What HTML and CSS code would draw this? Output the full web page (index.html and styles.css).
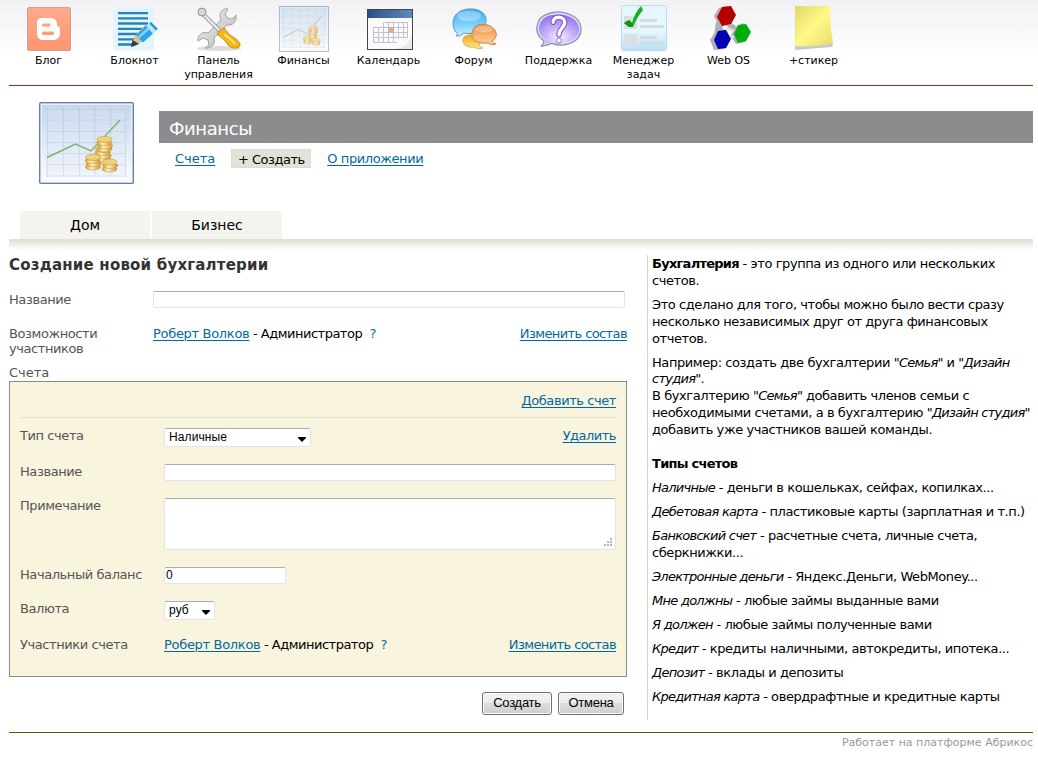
FILE: index.html
```html
<!DOCTYPE html>
<html lang="ru">
<head>
<meta charset="utf-8">
<title>Финансы</title>
<link rel="stylesheet" href="styles.css">
</head>
<body>
<svg class="defs" width="0" height="0">
  <defs>
    <linearGradient id="sky" x1="0" y1="0" x2="0" y2="1"><stop offset="0" stop-color="#c3d5ee"/><stop offset="1" stop-color="#fdfdff"/></linearGradient>
    <linearGradient id="orange" x1="0" y1="0" x2="0" y2="1"><stop offset="0" stop-color="#ffa98d"/><stop offset="1" stop-color="#ff9a72"/></linearGradient>
    <linearGradient id="paper" x1="0" y1="0" x2="0" y2="1"><stop offset="0" stop-color="#e4f5fe"/><stop offset=".55" stop-color="#e9f7ff"/><stop offset="1" stop-color="#b9e0f8"/></linearGradient>
    <linearGradient id="coin" x1="0" y1="0" x2="1" y2="0"><stop offset="0" stop-color="#d09a30"/><stop offset=".4" stop-color="#fff3bd"/><stop offset="1" stop-color="#cc9433"/></linearGradient>
    <linearGradient id="blueb" x1="0" y1="0" x2="0" y2="1"><stop offset="0" stop-color="#3fa5e8"/><stop offset=".5" stop-color="#71cbff"/><stop offset="1" stop-color="#c9f1ff"/></linearGradient>
    <linearGradient id="orangeb" x1="0" y1="0" x2="0" y2="1"><stop offset="0" stop-color="#ee8a3a"/><stop offset="1" stop-color="#ffd3a0"/></linearGradient>
    <linearGradient id="yellowb" x1="0" y1="0" x2="0" y2="1"><stop offset="0" stop-color="#e8a920"/><stop offset="1" stop-color="#ffe98c"/></linearGradient>
    <radialGradient id="violet" cx=".5" cy=".8" r=".75"><stop offset="0" stop-color="#f4f0ff"/><stop offset=".5" stop-color="#c3b0fb"/><stop offset="1" stop-color="#9476ee"/></radialGradient>
    <linearGradient id="note" x1="0" y1="0" x2="1" y2="1"><stop offset="0" stop-color="#e2d768"/><stop offset=".5" stop-color="#fff986"/><stop offset="1" stop-color="#e5dc6c"/></linearGradient>
    <linearGradient id="steel" x1="0" y1="0" x2="1" y2="1"><stop offset="0" stop-color="#f4f4f4"/><stop offset="1" stop-color="#b4b4b4"/></linearGradient>
    <linearGradient id="calhead" x1="0" y1="0" x2="1" y2="0"><stop offset="0" stop-color="#2b4f8c"/><stop offset="1" stop-color="#6089bd"/></linearGradient>
    <g id="stack3" fill="url(#coin)" stroke="#c9963a" stroke-width=".6">
      <ellipse cx="0" cy="0" rx="7.500" ry="3"/>
      <ellipse cx=".7" cy="-3.200" rx="7.500" ry="3"/>
      <ellipse cx="-.4" cy="-6.400" rx="7.500" ry="3"/>
      <ellipse cx="0" cy="-9.600" rx="7.500" ry="3" fill="#f0d27a"/>
    </g>
    <symbol id="finance" viewBox="0 0 95 82">
      <rect x=".8" y=".8" width="93.4" height="80.4" rx="1" fill="url(#sky)" stroke="#657f9f" stroke-width="1.600"/>
      <rect x="2.200" y="2.200" width="90.600" height="77.600" fill="none" stroke="#eef5fc" stroke-width="1.200"/>
      <rect x="7" y="6" width="80" height="69" fill="#dfe9f6" opacity=".3"/>
      <path d="M8.500 6V75M24.500 6V75M40.500 6V75M56 6V75M71.500 6V75M86.500 6V75M7 7.500H87M7 18H87M7 29.500H87M7 40.500H87M7 51.500H87M7 62.500H87M7 74H87" stroke="#8996a8" stroke-opacity=".2" stroke-width="1.200" fill="none"/>
      <path d="M8 55.500L36.500 42L52 49L81 18" fill="none" stroke="#7fb370" stroke-width="1.400"/>
      <use href="#stack3" x="64" y="57"/><use href="#stack3" x="65.500" y="47"/>
      <use href="#stack3" x="54" y="65"/><g fill="url(#coin)" stroke="#c9963a" stroke-width=".6"><ellipse cx="70.500" cy="67" rx="7.500" ry="3"/><ellipse cx="71.300" cy="63.500" rx="7.500" ry="3"/><ellipse cx="70.500" cy="60" rx="7.500" ry="3" fill="#f0d27a"/></g>
    </symbol>
  </defs>
</svg>
<nav class="apps">
  <a class="app"><svg width="44" height="44" viewBox="0 0 44 44"><rect x=".5" y=".5" width="43" height="43" rx="1.500" fill="url(#orange)" stroke="#c9a294"/><path d="M1 30Q22 28 43 15V43H1Z" fill="#ff8e68" opacity=".2"/><path fill="#fff" fill-rule="evenodd" d="M15 11h8c5 0 7 3 7 6v1c0 2 3 1 3 4v4c0 4-2 7-7 7H16c-4 0-6-3-6-6V16c0-3 2-5 5-5Zm1.500 5.500a1.600 1.600 0 0 0 0 3.200H22a1.600 1.600 0 0 0 0-3.200Zm0 8a1.700 1.700 0 0 0 0 3.400h9a1.700 1.700 0 0 0 0-3.400Z"/></svg>Блог</a>
  <a class="app nudge"><svg width="46" height="44" viewBox="0 0 46 44"><rect x="1" y=".5" width="41" height="43" rx="4" fill="#e2f4fd"/><path d="M6 6.200H36M6 11.300H36M6 16.500H36M6 21.800H36M6 27H30M6 32.300H25M6 37.500H24" stroke="#2484b5" stroke-width="2.300"/><path d="M20 39L23 40L43 25L37 19Z" fill="#b8ddf0" opacity=".7"/><path d="M33.500 17.500L40 26L28.500 36L20 40L22 30Z" fill="#e0bd94"/><path d="M24 28L34 18.500L41 26.500L31 35.500Z" fill="#27a8e6"/><path d="M26.500 30.500L37 21" stroke="#7ad4fa" stroke-width="2.500"/><path d="M34 18.500L37 16.500L44 23.500L41 26.500Z" fill="#c5e4f2"/><path d="M37 16.500L39 15L46 22L44 23.500Z" fill="#169ce0"/><path d="M20.500 33L19 40L27 37Z" fill="#303942"/></svg>Блокнот</a>
  <a class="app"><svg width="50" height="44" viewBox="0 0 50 44"><ellipse cx="25" cy="41.500" rx="22" ry="2.500" fill="#bbb" opacity=".5"/><path d="M31 2C26 4 25 8 27 13L14 26C8 24 3 29 4 34L9 31L14 33L15 38L11 41C18 42 22 36 20 31L33 18C39 19 43 14 42 8L38 12L33 11L31 7L34 2C33 1 32 1 31 2Z" fill="url(#steel)" stroke="#a3a3a3"/><path d="M9 7L28 26" stroke="#8b8b8b" stroke-width="4"/><path d="M8 6L27 25" stroke="#e8e8e8" stroke-width="2.500"/><circle cx="8" cy="5" r="4" fill="#d8d8d8" stroke="#929292"/><path d="M24 25L30 21Q34 28 42 32Q48 37 45 40Q39 43 34 38Q31 32 24 28Z" fill="#f2b719" stroke="#cf8b05"/><path d="M30 27Q37 32 41 37" fill="none" stroke="#ffe480" stroke-width="2"/></svg>Панель управления</a>
  <a class="app"><svg class="faded" width="50" height="44" viewBox="0 0 95 82" preserveAspectRatio="none"><use href="#finance" width="95" height="82"/></svg>Финансы</a>
  <a class="app"><svg width="48" height="44" viewBox="0 0 48 44"><rect x="2.500" y="2.500" width="45" height="40" fill="#fafafa" stroke="#454545"/><rect x="3" y="3" width="44" height="8" fill="url(#calhead)"/><path d="M18.500 15.500H42.500M8 20.500H42.500M8 25.500H42.500M8 30.500H42.500M8 35.500H32M8.500 20.500V36M13.500 20.500V36M18.500 15.500V36M23.500 15.500V36M28.500 15.500V36M33.500 15.500V31M38.500 15.500V31M42.500 15.500V31" stroke="#c0c2d4" fill="none"/><rect x="23" y="20" width="6" height="6" fill="#dab09c"/><path d="M47 27Q43 41 29 42H47Z" fill="#e8e9e9"/><path d="M47 27Q45 35 41 36Q43 38 39 39Q34 42 29 42Q43 41 47 27" fill="#fff"/></svg>Календарь</a>
  <a class="app"><svg width="48" height="44" viewBox="0 0 48 44"><path d="M5 24C0 13 5 3 19 2C33 1 40 11 34 20C29 27 18 27 14 26Q10 30 6 29Q9 26 5 24Z" fill="url(#blueb)" stroke="#4d9bd0"/><ellipse cx="19" cy="9" rx="12" ry="5.500" fill="#fff" opacity=".32"/><path d="M13 34C12 29 18 27 24 28C31 29 34 34 29 38Q31 41 33 41Q28 43 24 40C18 41 13 38 13 34Z" fill="url(#yellowb)" stroke="#e0b352"/><path d="M22 26C23 18 32 15 40 19C48 23 48 31 42 34Q42 36 46 37Q41 39 38 36C27 37 21 33 22 26Z" fill="url(#orangeb)" stroke="#cf8143"/><ellipse cx="34" cy="22" rx="9" ry="3.500" fill="#fff" opacity=".3"/></svg>Форум</a>
  <a class="app"><svg width="48" height="44" viewBox="0 0 50 44"><path d="M9 34C-2 27 0 10 14 6C29 1 48 8 48 22C48 36 30 42 18 37Q12 39 6 40Q10 37 9 34Z" fill="#dcdcee" stroke="#8b8bb4" stroke-width="1.300"/><path d="M11 33C0 26 3 12 15 8C29 4 46 10 46 22C46 34 30 39 18 35Q13 37 10 37Q12 35 11 33Z" fill="url(#violet)"/><path d="M19 15C18 8 31 8 31 15C31 21 25 21 25 28" fill="none" stroke="#764fce" stroke-width="5.500" stroke-linecap="round"/><path d="M19 15C18 8 31 8 31 15C31 21 25 21 25 28" fill="none" stroke="#fff" stroke-width="3.500" stroke-linecap="round"/><circle cx="25" cy="34" r="2.600" fill="#fff" stroke="#8f63e0"/></svg>Поддержка</a>
  <a class="app raised"><svg width="46" height="46" viewBox="0 0 46 46"><rect x=".5" y=".5" width="45" height="45" rx="2" fill="url(#paper)" stroke="#b7dcee"/><rect x="3" y="11" width="13" height="13" fill="#d9dfe3"/><rect x="3" y="29" width="13" height="12" fill="#d9dfe3"/><path d="M19 15.500H36M19 21.500H43M19 32.500H36M19 38H43" stroke="#d2d9dd" stroke-width="2.500"/><path d="M3 18L8 15L11 18Q14 7 20 1L22 5Q16 12 12 22H8Z" fill="#10b414"/><path d="M3 18L8 15L11 18L12 22H8Z" fill="#169014"/></svg>Менеджер задач</a>
  <a class="app"><svg width="46" height="46" viewBox="0 0 46 46"><g fill="#b0b0b0"><path d="M13 2L22 0L29 9L24 18L13 20L8 10Z"/><path d="M28 22L37 17L44 26L39 36L30 38L25 30Z"/><path d="M9 26L18 23L25 32L19 43L8 44L4 34Z"/><path d="M10 16L17 18L16 28L8 29Z"/><path d="M22 14L33 23L29 28L19 18Z"/></g><path d="M21 22L28 25M20 30L28 31" stroke="#dedede" stroke-width="2.500"/><path d="M16 1L25 0L30 9L25 18L16 20L11 11Z" fill="#b60000"/><path d="M32 19L40 18L45 26L40 35L32 37L28 28Z" fill="#00ae0b"/><path d="M12 25L20 24L25 33L20 42L12 43L8 34Z" fill="#0000b2"/></svg>Web OS</a>
  <a class="app raised"><svg width="40" height="46" viewBox="0 0 40 46"><path d="M1 8L39 39L38 42L1 45Z" fill="#cacaca"/><path d="M1 1H36Q36 22 39 38Q22 42 1 41Q2 20 1 1Z" fill="url(#note)"/></svg>+стикер</a>
</nav>

<main class="page">
  <header class="head">
    <svg class="logo" width="95" height="82"><use href="#finance"/></svg>
    <div class="headmain">
      <h1>Финансы</h1>
      <div class="menu"><a class="loose">Счета</a><button class="create">+ Создать</button><a>О приложении</a></div>
    </div>
  </header>
  <div class="tabs"><a>Дом</a><a>Бизнес</a></div>
  <div class="shade"></div>

  <div class="columns">
    <section class="form">
      <h2>Создание новой бухгалтерии</h2>
      <div class="row first"><label>Название</label><input type="text"></div>
      <div class="row people"><label>Возможности участников</label><div class="roles"><span><a class="person">Роберт Волков</a> - Администратор &nbsp;<i class="q">?</i></span><a class="edit">Изменить состав</a></div></div>
      <div class="caption">Счета</div>
      <div class="box">
        <div class="add"><a>Добавить счет</a></div>
        <div class="row type"><label>Тип счета</label><div class="roles"><span class="select wide">Наличные<svg width="8" height="5" viewBox="0 0 8 5"><path d="M0 0H8V1L4 5L0 1Z"/></svg></span><a>Удалить</a></div></div>
        <div class="row name"><label>Название</label><input type="text"></div>
        <div class="row remark"><label>Примечание</label><div class="area"><svg width="8" height="8" viewBox="0 0 8 8"><path d="M6 0h2v2H6zM3 3h2v2H3zM6 3h2v2H6zM0 6h2v2H0zM3 6h2v2H3zM6 6h2v2H6z" fill="#b8b8b8"/></svg></div></div>
        <div class="row balance"><label>Начальный баланс</label><input class="short" type="text" value="0"></div>
        <div class="row currency"><label>Валюта</label><span class="select">руб<svg width="8" height="5" viewBox="0 0 8 5"><path d="M0 0H8V1L4 5L0 1Z"/></svg></span></div>
        <div class="row members"><label>Участники счета</label><div class="roles"><span><a class="person">Роберт Волков</a> - Администратор &nbsp;<i class="q">?</i></span><a class="edit">Изменить состав</a></div></div>
      </div>
      <div class="buttons"><button>Создать</button><button>Отмена</button></div>
    </section>
    <aside>
      <p><b>Бухгалтерия</b> - это группа из одного или нескольких<br>счетов.</p>
      <p>Это сделано для того, чтобы можно было вести сразу<br>несколько независимых друг от друга финансовых<br>отчетов.</p>
      <p class="example">Например: создать две бухгалтерии <i>"Семья"</i> и <i>"Дизайн<br>студия"</i>.</p>
      <p class="more">В бухгалтерию <i>"Семья"</i> добавить членов семьи с<br>необходимыми счетами, а в бухгалтерию <i>"Дизайн студия"</i><br>добавить уже участников вашей команды.</p>
      <p><b>Типы счетов</b></p>
      <p><i>Наличные</i> - деньги в кошельках, сейфах, копилках...</p>
      <p><i>Дебетовая карта</i> - пластиковые карты (зарплатная и т.п.)</p>
      <p><i>Банковский счет</i> - расчетные счета, личные счета,<br>сберкнижки...</p>
      <p><i>Электронные деньги</i> - Яндекс.Деньги, WebMoney...</p>
      <p><i>Мне должны</i> - любые займы выданные вами</p>
      <p><i>Я должен</i> - любые займы полученные вами</p>
      <p><i>Кредит</i> - кредиты наличными, автокредиты, ипотека...</p>
      <p><i>Депозит</i> - вклады и депозиты</p>
      <p><i>Кредитная карта</i> - овердрафтные и кредитные карты</p>
    </aside>
  </div>
  <footer>Работает на платформе Абрикос</footer>
</main>
</body>
</html>
```
FILE: styles.css
```css
* { box-sizing: border-box; }
body { margin: 0; background: #fff; color: #000; font: 13px/17px Verdana, "DejaVu Sans", sans-serif; letter-spacing: -.42px; height: 773px; overflow: hidden; }
h1, h2, p { margin: 0; font-weight: normal; }
.defs { display: block; height: 0; }
.apps { display: flex; height: 85px; padding: 6px 0 0 6px; background: linear-gradient(#f1f1f4, #fff 55px); letter-spacing: 0; }
.app { width: 85px; display: flex; flex-direction: column; align-items: center; text-align: center; font-size: 11px; line-height: 14px; padding: 0 6px; }
.app svg { height: 46px; margin-bottom: 2px; flex: none; }
.nudge { padding: 0 5px 0 7px; }
.raised svg { margin-top: -1px; margin-bottom: 3px; }
.faded { opacity: .7; }
.page { margin: 0 5px 0 9px; border-top: 1px solid #b82200; }
.head { display: flex; height: 125px; padding-left: 30px; }
.logo { margin-top: 16px; margin-right: 25px; flex: none; }
.headmain { flex: 1; padding-top: 25px; }
h1 { background: #8c8c8e; color: #fff; height: 32px; padding-left: 10px; font-size: 18px; line-height: 35px; }
.menu { display: flex; gap: 16px; margin: 6px 0 0 16px; line-height: 20px; }
.menu a, .roles a, .add a { color: #0069a0; text-decoration: underline; text-underline-offset: 2px; text-decoration-thickness: 1px; white-space: nowrap; }
.menu .loose { letter-spacing: 0; }
.create { width: 80px; height: 19px; padding: 2px 0 0; border: 1px solid #d9dadb; background: #e2e2d6; color: #000; font: 13px/15px Verdana, "DejaVu Sans", sans-serif; letter-spacing: -.5px; white-space: nowrap; }
.tabs { display: flex; gap: 2px; padding-left: 11px; letter-spacing: 0; }
.tabs a { width: 130px; height: 28px; background: #f3f4ed; font-size: 14px; line-height: 28px; text-align: center; }
.shade { height: 11px; background: linear-gradient(#dedfd1, #fff); }
.columns { display: flex; height: 482px; }
.form { width: 618px; margin-right: 20px; color: #000; }
h2 { color: #333; font-size: 15px; font-weight: bold; line-height: 18px; letter-spacing: .2px; margin-top: 6px; height: 35px; white-space: nowrap; }
.row { display: grid; grid-template-columns: 144px 1fr; align-items: start; line-height: 15px; }
label, .caption { color: #555; }
label { white-space: nowrap; }
.first { height: 35px; padding-right: 2px; }
.first label { padding-top: 1px; }
input { width: 100%; height: 17px; border: 1px solid #e2e3ea; border-top-color: #abadb3; border-radius: 2px; padding: 0 1px 1px; margin: 0; background: #fff; font: 12px/14px Arial, "Liberation Sans", sans-serif; }
.people { height: 38px; }
.people label { white-space: normal; width: 120px; }
.roles { display: flex; justify-content: space-between; letter-spacing: -.5px; }
.roles .person { letter-spacing: -.31px; }
.roles .edit { letter-spacing: -.6px; }
.q { font-style: normal; color: #0069a0; }
.caption { line-height: 17px; height: 17px; letter-spacing: 0; }
.box { border: 1px solid #8b8b8b; background: #f9f4de; height: 296px; padding: 0 10px; }
.add { height: 36px; border-bottom: 1px solid #dfe0d5; text-align: right; line-height: 17px; padding-top: 10px; }
.type { height: 46px; padding-top: 10px; }
.name { height: 34px; }
.remark { height: 69px; }
.balance { height: 34px; }
.currency { height: 36px; }
.select { display: flex; justify-content: space-between; align-items: center; width: 51px; height: 19px; padding: 0 4px 1px; border: 1px solid #e2e3ea; border-top-color: #abadb3; border-radius: 2px; background: #fff; font: 12px/16px Arial, "Liberation Sans", sans-serif; letter-spacing: .1px; }
.select svg { margin-top: 4px; }
.wide { width: 147px; }
.short { width: 122px; }
.area { height: 52px; border: 1px solid #e2e3ea; border-top-color: #abadb3; border-radius: 2px; background: #fff; display: flex; justify-content: flex-end; align-items: flex-end; padding: 3px; }
.buttons { display: flex; justify-content: flex-end; gap: 6px; padding: 15px 3px 0 0; }
.buttons button { width: 66px; height: 23px; padding: 0 0 2px; border: 1px solid #707070; border-radius: 3px; box-shadow: inset 0 0 0 1px #fafafa; background: linear-gradient(#f2f2f2, #ebebeb 50%, #dddddd 50%, #cfcfcf); font: 13px Arial, "Liberation Sans", sans-serif; letter-spacing: -.25px; color: #000; }
.buttons button:first-child { width: 70px; }
aside { width: 386px; height: 465px; margin-top: 5px; padding-left: 4px; border-left: 1px solid #d6d6d6; white-space: nowrap; }
aside p { margin-bottom: 7px; }
aside i, aside b { letter-spacing: -.74px; }
aside .example { line-height: 16px; padding-top: 1px; margin-bottom: 0; }
aside .more { margin-bottom: 17px; }
footer { border-top: 1px solid #460; color: #999; text-align: right; font-size: 11px; line-height: 18px; letter-spacing: 0; padding-top: 1px; }
```
